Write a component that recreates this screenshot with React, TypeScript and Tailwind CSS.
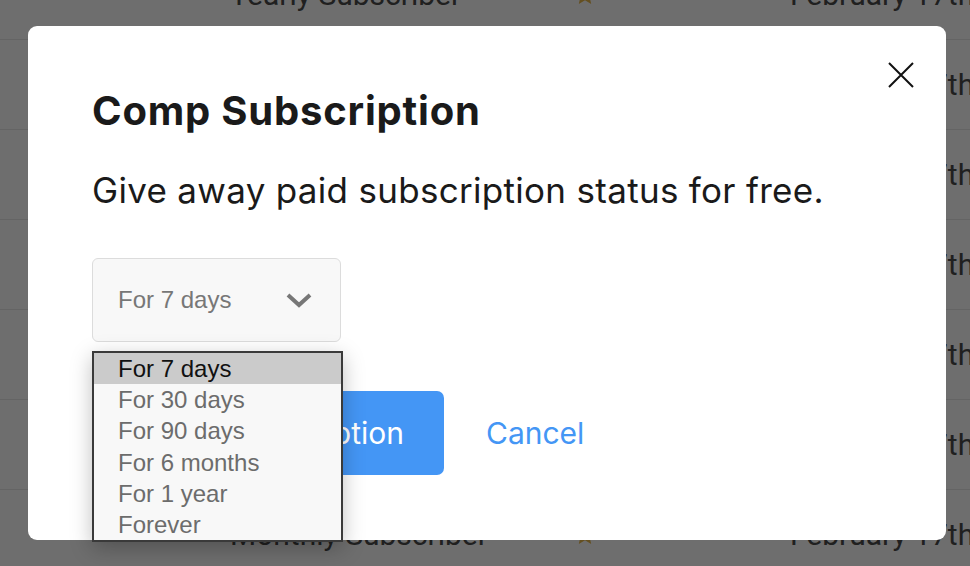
import type { FC } from "react";

const rows = [
	{ plan: "Yearly Subscriber", date: "February 17th, 2020" },
	{ plan: "Monthly Subscriber", date: "February 17th, 2020" },
	{ plan: "Yearly Subscriber", date: "February 17th, 2020" },
	{ plan: "Monthly Subscriber", date: "February 17th, 2020" },
	{ plan: "Yearly Subscriber", date: "February 17th, 2020" },
	{ plan: "Monthly Subscriber", date: "February 17th, 2020" },
	{ plan: "Monthly Subscriber", date: "February 17th, 2020" },
];

const options = [
	"For 7 days",
	"For 30 days",
	"For 90 days",
	"For 6 months",
	"For 1 year",
	"Forever",
];

const Star: FC = () => (
	<svg width="24" height="24" viewBox="0 0 24 24" className="text-[#e8b84a]">
		<path
			fill="currentColor"
			d="M12 2l2.9 6.6 7.1.6-5.4 4.7 1.6 7L12 17.3 5.8 20.9l1.6-7L2 9.2l7.1-.6z"
		/>
	</svg>
);

export default function App() {
	return (
		<div className="relative h-[566px] w-[970px] overflow-hidden bg-white font-['Inter',sans-serif]">
			<div className="-mt-[50px]">
				{rows.map((r, i) => (
					<div
						key={i}
						className="flex h-[90px] items-center border-b border-[#e8e8e8] font-['Roboto',sans-serif] text-[30px] text-[#4a4a4a]"
					>
						<div className="w-[573px] shrink-0 whitespace-nowrap pl-[230px]">{r.plan}</div>
						<div className="w-[217px] shrink-0">
							<Star />
						</div>
						<div className="shrink-0 whitespace-nowrap">{r.date}</div>
					</div>
				))}
			</div>

			<div className="absolute inset-0 bg-black/[0.57]" />

			<div className="absolute left-[28px] top-[26px] h-[514px] w-[918px] rounded-[9px] bg-white pl-[64px]">
				<button className="absolute right-[32px] top-[36px] flex h-[26px] w-[26px] items-center justify-center">
					<svg width="26" height="26" viewBox="0 0 26 26">
						<path d="M1 1L25 25M25 1L1 25" stroke="#111" strokeWidth="2" />
					</svg>
				</button>

				<h1 className="pt-[61px] text-[40px] font-bold leading-[48px] tracking-[0.8px] text-[#1a1a1a]">
					Comp Subscription
				</h1>
				<p className="mt-[34px] text-[35px] leading-[42px] tracking-[0.3px] text-[#1a1a1a]">
					Give away paid subscription status for free.
				</p>

				<div className="mt-[47px] flex h-[84px] w-[249px] items-center justify-between rounded-[6px] border border-[#dcdcdc] bg-[#f8f8f8] pl-[25px] pr-[28px] font-['Liberation_Sans',sans-serif] text-[24px] text-[#777]">
					<span>For 7 days</span>
					<svg width="26" height="16" viewBox="0 0 26 16">
						<path d="M2 3L13 13L24 3" fill="none" stroke="#777" strokeWidth="4" />
					</svg>
				</div>

				<div className="mt-[49px] flex items-center gap-[42px]">
					<button className="flex h-[84px] w-[352px] items-center justify-end rounded-[7px] bg-[#4496f5] pr-[40px] text-[30px] text-white">
						Comp Subscription
					</button>
					<button className="text-[30px] text-[#4496f5]">Cancel</button>
				</div>

				<ul className="absolute left-[64px] top-[325px] w-[251px] border-2 border-[#3a3a3a] bg-[#f8f8f8] font-['Liberation_Sans',sans-serif] text-[24px] leading-[31.2px] text-[#6c6c6c] shadow-[0_6px_20px_rgba(0,0,0,0.25)]">
					{options.map((o, i) => (
						<li
							key={o}
							className={
								i === 0
									? "bg-[#cbcbcb] pl-[24px] text-[#111]"
									: "pl-[24px]"
							}
						>
							{o}
						</li>
					))}
				</ul>
			</div>
		</div>
	);
}
